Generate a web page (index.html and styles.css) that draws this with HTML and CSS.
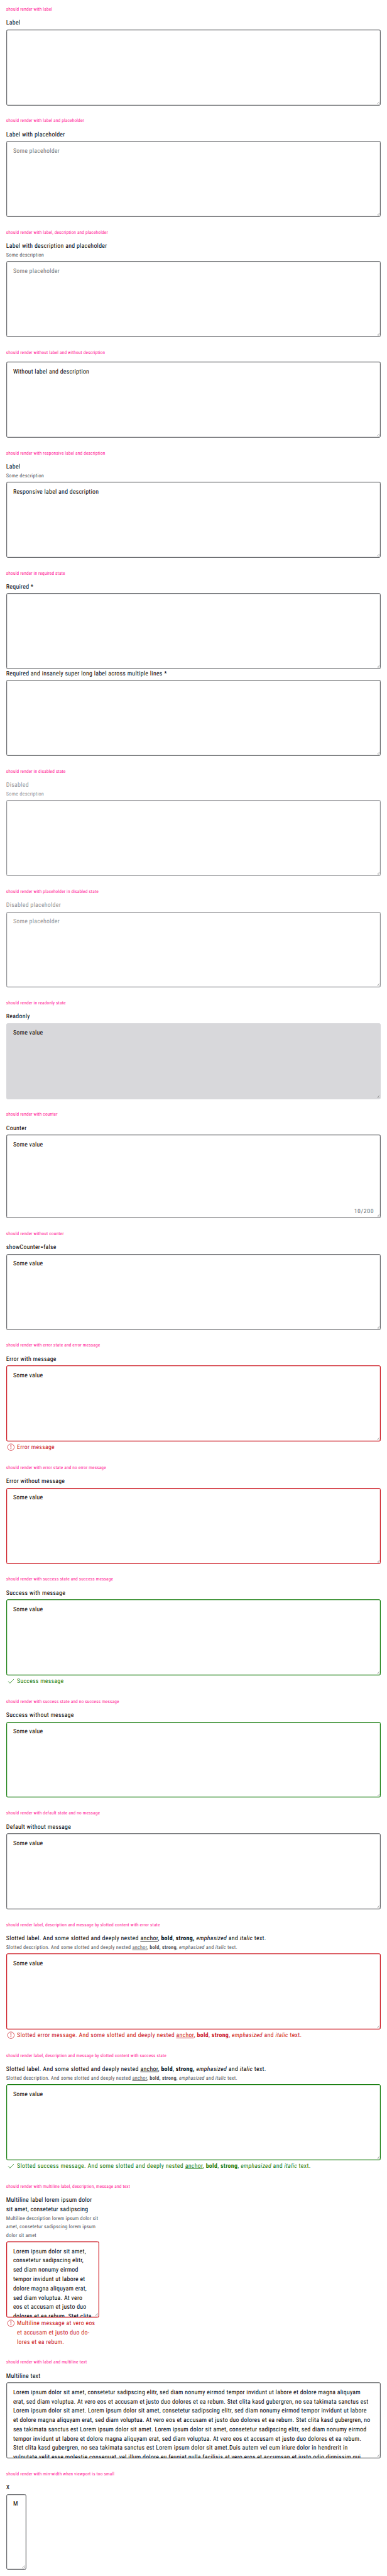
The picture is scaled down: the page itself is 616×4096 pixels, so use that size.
FILE: index.html
```
<!DOCTYPE html>
<html lang="en">
<head>
<meta charset="utf-8">
<title>Textarea states</title>
<link rel="stylesheet" href="styles.css">
</head>
<body>
<svg class="defs" aria-hidden="true">
  <symbol id="grip" viewBox="0 0 8 8"><path d="M.6 7.2l6.6-6.6M4.2 7.4l3.6-3.6" fill="none" stroke="#555" stroke-width=".9"/></symbol>
  <symbol id="error" viewBox="0 0 24 24"><circle cx="12" cy="11.6" r="8.5" fill="none" stroke="currentColor" stroke-width="1.2"/><path d="M11 6.4h2l-.4 6.6h-1.2zM11 14.4h2v2h-2z" fill="currentColor"/></symbol>
  <symbol id="success" viewBox="0 0 24 24"><path d="M5.3 12.2l4.2 4.6L19.2 6.8" fill="none" stroke="currentColor" stroke-width="1.3"/></symbol>
</svg>
<main>
  <section>
    <h2>should render with label</h2>
    <label>Label</label>
    <div class="field"><textarea></textarea><svg class="grip"><use href="#grip"/></svg></div>
  </section>
  <section>
    <h2>should render with label and placeholder</h2>
    <label>Label with placeholder</label>
    <div class="field"><textarea placeholder="Some placeholder"></textarea><svg class="grip"><use href="#grip"/></svg></div>
  </section>
  <section>
    <h2>should render with label, description and placeholder</h2>
    <label>Label with description and placeholder</label>
    <p class="description">Some description</p>
    <div class="field"><textarea placeholder="Some placeholder"></textarea><svg class="grip"><use href="#grip"/></svg></div>
  </section>
  <section>
    <h2>should render without label and without description</h2>
    <div class="field bare"><textarea>Without label and description</textarea><svg class="grip"><use href="#grip"/></svg></div>
  </section>
  <section>
    <h2>should render with responsive label and description</h2>
    <label>Label</label>
    <p class="description">Some description</p>
    <div class="field"><textarea>Responsive label and description</textarea><svg class="grip"><use href="#grip"/></svg></div>
  </section>
  <section>
    <h2>should render in required state</h2>
    <label>Required *</label>
    <div class="field"><textarea></textarea><svg class="grip"><use href="#grip"/></svg></div>
    <label>Required and insanely super long label across multiple lines *</label>
    <div class="field"><textarea></textarea><svg class="grip"><use href="#grip"/></svg></div>
  </section>
  <section class="disabled">
    <h2>should render in disabled state</h2>
    <label>Disabled</label>
    <p class="description">Some description</p>
    <div class="field"><textarea></textarea><svg class="grip"><use href="#grip"/></svg></div>
  </section>
  <section class="disabled">
    <h2>should render with placeholder in disabled state</h2>
    <label>Disabled placeholder</label>
    <div class="field"><textarea placeholder="Some placeholder"></textarea><svg class="grip"><use href="#grip"/></svg></div>
  </section>
  <section class="readonly">
    <h2>should render in readonly state</h2>
    <label>Readonly</label>
    <div class="field"><textarea readonly>Some value</textarea><svg class="grip"><use href="#grip"/></svg></div>
  </section>
  <section>
    <h2>should render with counter</h2>
    <label>Counter</label>
    <div class="field counted"><textarea>Some value</textarea><span class="counter">10/200</span><svg class="grip"><use href="#grip"/></svg></div>
  </section>
  <section>
    <h2>should render without counter</h2>
    <label>showCounter=false</label>
    <div class="field"><textarea>Some value</textarea><svg class="grip"><use href="#grip"/></svg></div>
  </section>
  <section class="error">
    <h2>should render with error state and error message</h2>
    <label>Error with message</label>
    <div class="field"><textarea>Some value</textarea><svg class="grip"><use href="#grip"/></svg></div>
    <div class="message"><svg class="icon"><use href="#error"/></svg><span>Error message</span></div>
  </section>
  <section class="error">
    <h2>should render with error state and no error message</h2>
    <label>Error without message</label>
    <div class="field"><textarea>Some value</textarea><svg class="grip"><use href="#grip"/></svg></div>
  </section>
  <section class="success">
    <h2>should render with success state and success message</h2>
    <label>Success with message</label>
    <div class="field"><textarea>Some value</textarea><svg class="grip"><use href="#grip"/></svg></div>
    <div class="message"><svg class="icon"><use href="#success"/></svg><span>Success message</span></div>
  </section>
  <section class="success">
    <h2>should render with success state and no success message</h2>
    <label>Success without message</label>
    <div class="field"><textarea>Some value</textarea><svg class="grip"><use href="#grip"/></svg></div>
  </section>
  <section>
    <h2>should render with default state and no message</h2>
    <label>Default without message</label>
    <div class="field"><textarea>Some value</textarea><svg class="grip"><use href="#grip"/></svg></div>
  </section>
  <section class="error">
    <h2>should render label, description and message by slotted content with error state</h2>
    <label class="slotted">Slotted label. And some slotted and deeply nested <u>anchor</u>, <b>bold</b>, <b>strong,</b> <i>emphasized</i> and <i>italic</i> text.</label>
    <p class="description slotted">Slotted description. And some slotted and deeply nested <u>anchor</u>, <b>bold, strong</b>, <i>emphasized</i> and <i>italic</i> text.</p>
    <div class="field"><textarea>Some value</textarea><svg class="grip"><use href="#grip"/></svg></div>
    <div class="message"><svg class="icon"><use href="#error"/></svg><span class="slotted">Slotted error message. And some slotted and deeply nested <u>anchor</u>, <b>bold</b>, <b>strong</b>, <i>emphasized</i> and <i>italic</i> text.</span></div>
  </section>
  <section class="success">
    <h2>should render label, description and message by slotted content with success state</h2>
    <label class="slotted">Slotted label. And some slotted and deeply nested <u>anchor</u>, <b>bold</b>, <b>strong,</b> <i>emphasized</i> and <i>italic</i> text.</label>
    <p class="description slotted">Slotted description. And some slotted and deeply nested <u>anchor</u>, <b>bold, strong</b>, <i>emphasized</i> and <i>italic</i> text.</p>
    <div class="field"><textarea>Some value</textarea><svg class="grip"><use href="#grip"/></svg></div>
    <div class="message"><svg class="icon"><use href="#success"/></svg><span class="slotted">Slotted success message. And some slotted and deeply nested <u>anchor</u>, <b>bold</b>, <b>strong</b>, <i>emphasized</i> and <i>italic</i> text.</span></div>
  </section>
  <section class="error">
    <h2>should render with multiline label, description, message and text</h2>
    <label>Multiline label lorem ipsum dolor<br>sit amet, consetetur sadipscing</label>
    <p class="description">Multiline description lorem ipsum dolor sit<br>amet, consetetur sadipscing lorem ipsum<br>dolor sit amet</p>
    <div class="field narrow"><textarea>Lorem ipsum dolor sit amet,
consetetur sadipscing elitr,
sed diam nonumy eirmod
tempor invidunt ut labore et
dolore magna aliquyam erat,
sed diam voluptua. At vero
eos et accusam et justo duo
dolores et ea rebum. Stet clita</textarea><svg class="grip"><use href="#grip"/></svg></div>
    <div class="message"><svg class="icon"><use href="#error"/></svg><span>Multiline message at vero eos<br>et accusam et justo duo do-<br>lores et ea rebum.</span></div>
  </section>
  <section>
    <h2>should render with label and multiline text</h2>
    <label>Multiline text</label>
    <div class="field"><textarea>Lorem ipsum dolor sit amet, consetetur sadipscing elitr, sed diam nonumy eirmod tempor invidunt ut labore et dolore magna aliquyam
erat, sed diam voluptua. At vero eos et accusam et justo duo dolores et ea rebum. Stet clita kasd gubergren, no sea takimata sanctus est
Lorem ipsum dolor sit amet. Lorem ipsum dolor sit amet, consetetur sadipscing elitr, sed diam nonumy eirmod tempor invidunt ut labore
et dolore magna aliquyam erat, sed diam voluptua. At vero eos et accusam et justo duo dolores et ea rebum. Stet clita kasd gubergren, no
sea takimata sanctus est Lorem ipsum dolor sit amet. Lorem ipsum dolor sit amet, consetetur sadipscing elitr, sed diam nonumy eirmod
tempor invidunt ut labore et dolore magna aliquyam erat, sed diam voluptua. At vero eos et accusam et justo duo dolores et ea rebum.
Stet clita kasd gubergren, no sea takimata sanctus est Lorem ipsum dolor sit amet.Duis autem vel eum iriure dolor in hendrerit in
vulputate velit esse molestie consequat, vel illum dolore eu feugiat nulla facilisis at vero eros et accumsan et iusto odio dignissim qui</textarea><svg class="grip"><use href="#grip"/></svg></div>
  </section>
  <section>
    <h2>should render with min-width when viewport is too small</h2>
    <label>X</label>
    <div class="field tiny"><textarea>M</textarea><svg class="grip"><use href="#grip"/></svg></div>
  </section>
</main>
</body>
</html>
```

FILE: styles.css
```
/* 1rem is one 16px step of the original grid */
html {
  font-size: 9.8536px;
  overflow: hidden;
}
body {
  margin: 0;
  background: #fff;
  color: #010205;
  font-family: Roboto, "Liberation Sans", sans-serif;
  font-stretch: 75%;
  text-rendering: geometricPrecision;
}
.defs { position: absolute; width: 0; height: 0; }
main { width: 62.5rem; }
section {
  --line: #6b6d70;
  padding: 0 1rem 1rem;
  white-space: nowrap;
}
h2 {
  margin: 0;
  font-size: .75rem;
  font-weight: 400;
  line-height: 3rem;
  letter-spacing: .022em;
  color: #ff1493;
}
label {
  display: block;
  margin-bottom: -.08rem;
  padding-top: .08rem;
  font-size: 1rem;
  line-height: 1.5rem;
  letter-spacing: .029em;
}
.description {
  margin: 0 0 -.06rem;
  padding-top: .06rem;
  font-size: .836rem;
  line-height: 1.375rem;
  letter-spacing: .027em;
  color: #535457;
}
.field {
  position: relative;
  height: 12.25rem;
  margin-top: .25rem;
}
.bare { margin-top: 0; }
.counted { height: 13.5rem; }
.narrow { width: 15rem; }
.tiny { width: 3.25rem; }
textarea {
  display: block;
  box-sizing: border-box;
  width: 100%;
  height: 100%;
  margin: 0;
  padding: .87rem 0 0 1.02rem;
  border: 1px solid var(--line);
  border-radius: .25rem;
  box-shadow: inset 0 0 0 .23px var(--line);
  background: transparent;
  color: #010205;
  font-family: inherit;
  font-stretch: 75%;
  font-size: 1rem;
  line-height: 1.5rem;
  letter-spacing: .0275em;
  text-rendering: geometricPrecision;
  white-space: pre;
  overflow: hidden;
  resize: none;
  outline: 0;
}
textarea::placeholder { color: #7a7b7d; opacity: 1; }
.grip {
  position: absolute;
  right: .16rem;
  bottom: .2rem;
  width: .5rem;
  height: .5rem;
}
.counter {
  position: absolute;
  right: 1.1rem;
  bottom: .3rem;
  font-size: 1rem;
  line-height: 1.5rem;
  letter-spacing: .06em;
  color: #6b6d70;
}
.message {
  display: flex;
  gap: .25rem;
  margin-top: .25rem;
  font-size: 1rem;
  line-height: 1.5rem;
  letter-spacing: .029em;
  color: var(--line);
}
.message span {
  margin-bottom: -.08rem;
  padding-top: .08rem;
}
.slotted { letter-spacing: .034em; }
.icon { width: 1.5rem; height: 1.5rem; flex: none; }
.error { --line: #cc1922; }
.success { --line: #197e10; }
.disabled { --line: #949598; }
.disabled label, .disabled .description, .disabled textarea::placeholder { color: #949598; }
.readonly textarea { background: #d8d8db; border-color: #d8d8db; box-shadow: none; }
```
